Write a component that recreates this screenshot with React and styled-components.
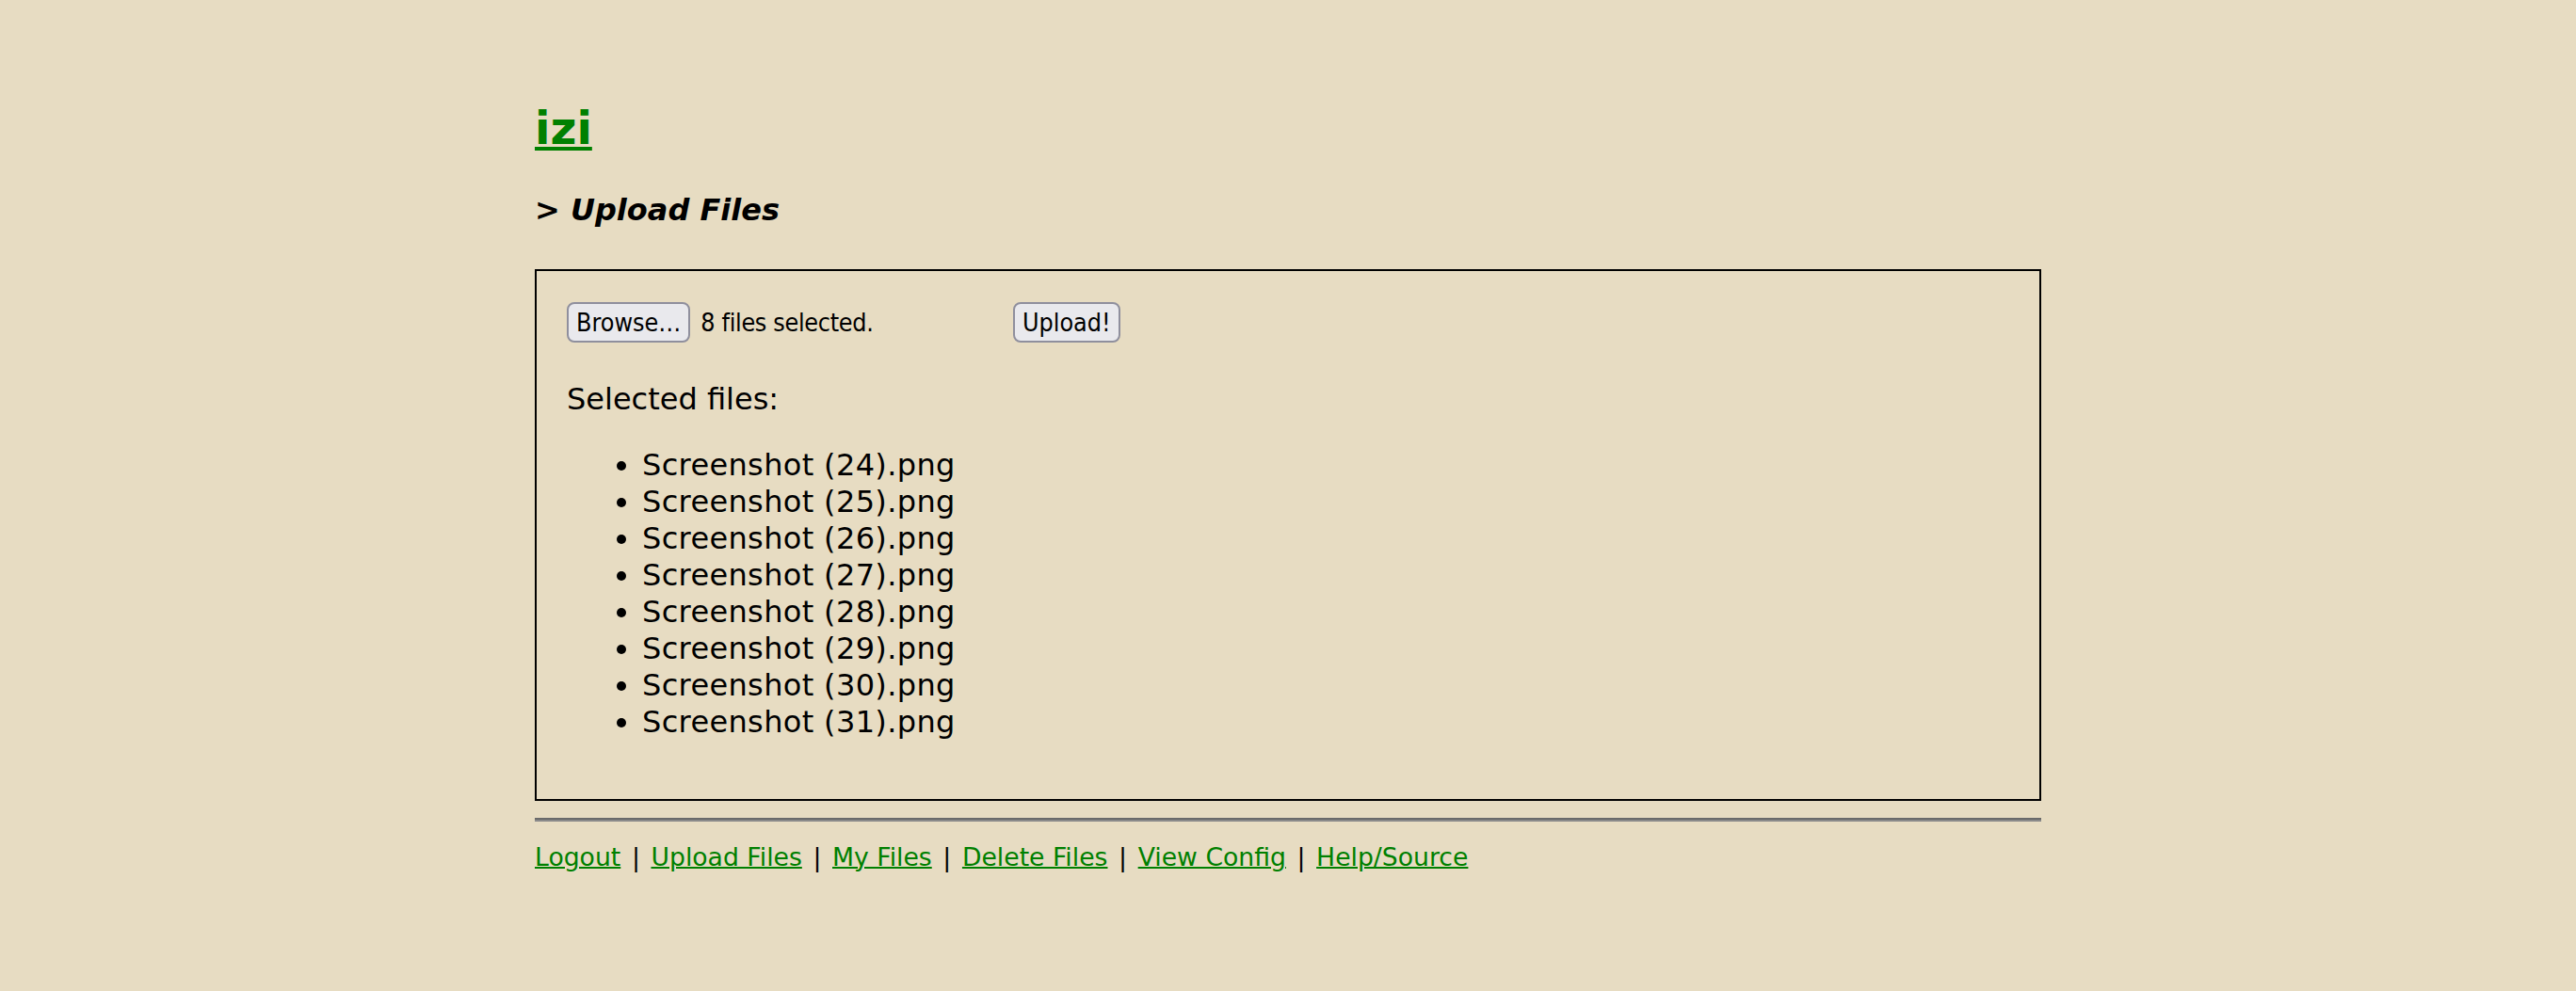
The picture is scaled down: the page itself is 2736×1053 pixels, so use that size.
import React from "react";
import styled, { createGlobalStyle } from "styled-components";

const files = [24, 25, 26, 27, 28, 29, 30, 31].map(
  (n) => `Screenshot (${n}).png`
);

const links = [
  "Logout",
  "Upload Files",
  "My Files",
  "Delete Files",
  "View Config",
  "Help/Source",
];

export default function App() {
  return (
    <>
      <GlobalStyle />
      <Page>
        <Title>
          <a href="#">izi</a>
        </Title>
        <Heading>&gt; Upload Files</Heading>
        <UploadBox>
          <FormRow>
            <FilePicker>
              <Button type="button">Browse…</Button>
              <FileStatus>8 files selected.</FileStatus>
            </FilePicker>
            <Button type="button">Upload!</Button>
          </FormRow>
          <Label>Selected files:</Label>
          <FileList>
            {files.map((f) => (
              <li key={f}>{f}</li>
            ))}
          </FileList>
        </UploadBox>
        <Rule />
        <Footer>
          {links.map((l, i) => (
            <React.Fragment key={l}>
              {i > 0 && <Sep>|</Sep>}
              <FooterLink href="#">{l}</FooterLink>
            </React.Fragment>
          ))}
        </Footer>
      </Page>
    </>
  );
}

const GlobalStyle = createGlobalStyle`
  html, body {
    margin: 0;
    padding: 0;
    background: #e7dcc2;
  }
  body {
    font-family: "DejaVu Sans", Verdana, sans-serif;
    font-size: 32px;
    color: #000;
  }
`;

const Page = styled.div`
  width: 1600px;
  margin: 0 auto;
  padding-top: 108px;
  padding-bottom: 60px;
`;

const Title = styled.h1`
  margin: 0;
  font-size: 48px;
  line-height: 56px;
  font-weight: bold;

  a {
    color: #008000;
    text-decoration: underline;
    text-decoration-thickness: 4px;
    text-underline-offset: 3px;
  }
`;

const Heading = styled.h3`
  margin: 41px 0 0;
  font-size: 32px;
  line-height: 37px;
  font-weight: bold;
  font-style: italic;
`;

const UploadBox = styled.div`
  margin-top: 44px;
  border: 2px solid #000;
  padding: 33px 32px 62px;
`;

const FormRow = styled.div`
  display: flex;
  align-items: center;
  height: 43px;
`;

const FilePicker = styled.span`
  display: inline-flex;
  align-items: center;
  gap: 11px;
  width: 466px;
  margin-right: 8px;
`;

const Button = styled.button`
  box-sizing: border-box;
  height: 43px;
  padding: 0 8px;
  font-family: "DejaVu Sans Condensed", "DejaVu Sans", sans-serif;
  font-stretch: condensed;
  font-size: 26.67px;
  color: #000;
  background: #e9e9ed;
  border: 2px solid #8f8f9d;
  border-radius: 8px;
`;

const FileStatus = styled.span`
  font-family: "DejaVu Sans Condensed", "DejaVu Sans", sans-serif;
  font-stretch: condensed;
  font-size: 26.67px;
  letter-spacing: -0.3px;
`;

const Label = styled.p`
  margin: 41px 0 0;
  line-height: 39px;
`;

const FileList = styled.ul`
  margin: 31px 0 0;
  padding-left: 80px;
  line-height: 39px;
  letter-spacing: 0.35px;
  list-style: disc;
`;

const Rule = styled.hr`
  margin: 18px 0 0;
  height: 0;
  border: 0;
  border-top: 2px solid #6a6a6a;
  border-bottom: 2px solid #8a8a8a;
`;

const Footer = styled.div`
  margin-top: 22px;
  font-size: 26.67px;
  line-height: 31px;
`;

const FooterLink = styled.a`
  color: #008000;
  text-decoration: underline;
  text-decoration-thickness: 2px;
`;

const Sep = styled.span`
  display: inline-block;
  margin: 0 11.6px;
`;
